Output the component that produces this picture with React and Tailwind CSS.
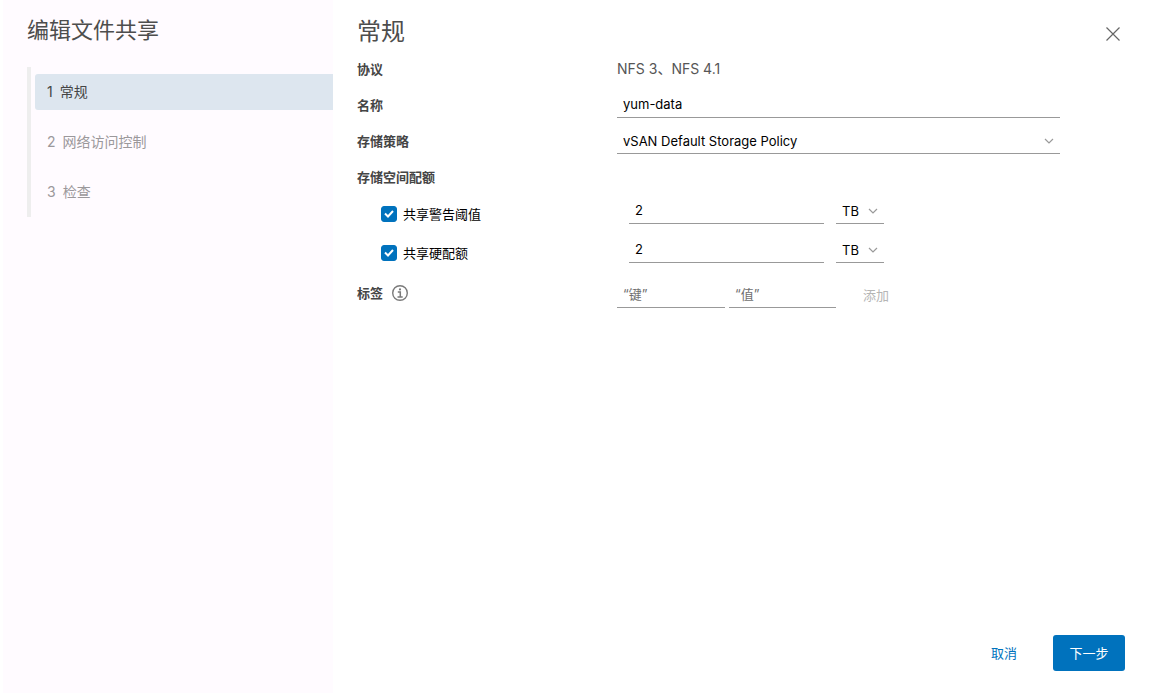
import React, { useState } from 'react';

const steps = ['常规', '网络访问控制', '检查'];

const inputStyle =
    'h-6 min-w-0 rounded-none border-0 border-b border-[#999999] bg-transparent px-1.5 pb-[3px] text-[13px] leading-5 text-black outline-none';

const selectStyle =
    'block h-6 appearance-none rounded-none border-0 border-b border-[#999999] bg-transparent px-1.5 pb-px text-[13px] leading-5 text-black outline-none';

const Chevron = () => (
    <svg viewBox="0 0 10 10" className="pointer-events-none absolute top-[6px] right-1.5 h-2.5 w-2.5" fill="none" stroke="#9a9a9a" strokeWidth="1.2">
        <path d="M1 3l4 4 4-4" />
    </svg>
);

const Checkbox = ({ id, checked, onChange, label }) => (
    <div className="flex h-[38px] w-[260px] shrink-0 items-center gap-1.5 pl-6">
        <span className="relative block h-4 w-4">
            <input
                id={id}
                type="checkbox"
                checked={checked}
                onChange={(e) => onChange(e.target.checked)}
                className="block h-4 w-4 appearance-none rounded-[3px] border border-[#0072bd] checked:bg-[#0072bd]"
            />
            {checked && (
                <svg viewBox="0 0 16 16" className="pointer-events-none absolute inset-0 h-4 w-4" fill="none" stroke="#fff" strokeWidth="2">
                    <path d="M4 7.5l3 3L12 5" />
                </svg>
            )}
        </span>
        <label htmlFor={id} className="text-[13px] leading-5 text-black">
            {label}
        </label>
    </div>
);

const QuotaRow = ({ id, label }) => {
    const [checked, setChecked] = useState(true);
    const [value, setValue] = useState('2');

    return (
        <div className="flex h-[39px]">
            <Checkbox id={id} checked={checked} onChange={setChecked} label={label} />
            <div className="flex gap-3 pt-[5px] pl-3">
                <input
                    aria-label={label}
                    value={value}
                    onChange={(e) => setValue(e.target.value)}
                    className={`${inputStyle} w-[195px]`}
                />
                <div className="relative h-6">
                    <select aria-label={`${label}单位`} defaultValue="TB" className={`${selectStyle} w-12`}>
                        <option>GB</option>
                        <option>TB</option>
                    </select>
                    <Chevron />
                </div>
            </div>
        </div>
    );
};

const Label = ({ children, ...props }) => (
    <label className="flex h-[35px] w-[260px] shrink-0 items-center text-[13px] leading-5 font-bold text-[#454545]" {...props}>
        {children}
    </label>
);

const App = () => {
    const [name, setName] = useState('yum-data');

    return (
        <div className="flex min-h-screen bg-white pb-px pl-[3px] font-[Inter,'Noto_Sans_CJK_SC',sans-serif] text-[13px] text-[#565656]">
            <aside className="w-[330px] shrink-0 bg-[#fffbff] pl-6">
                <h1 className="pt-[14px] text-[22px] leading-8 text-[#4d4d4d]">编辑文件共享</h1>
                <nav className="mt-[21px] border-l-4 border-[#eeeeee] pl-1">
                    <ol>
                        {steps.map((step, i) => (
                            <li key={step} className="flex h-[50px] items-center">
                                <button
                                    type="button"
                                    aria-current={i === 0 ? 'step' : undefined}
                                    className={`flex h-9 w-full items-center gap-[7px] rounded-l-[3px] pl-3 text-left text-sm ${
                                        i === 0 ? 'bg-[#dde6ef] text-[#454545]' : 'text-[#9b989b]'
                                    }`}
                                >
                                    <span>{i + 1}</span>
                                    <span>{step}</span>
                                </button>
                            </li>
                        ))}
                    </ol>
                </nav>
            </aside>

            <main className="flex min-w-0 flex-1 flex-col pr-7 pl-6">
                <header className="flex h-[51px] items-start justify-between pt-4">
                    <h2 className="text-2xl leading-8 text-[#4d4d4d]">常规</h2>
                    <button type="button" aria-label="关闭" className="flex h-9 w-6 items-center justify-center">
                        <svg viewBox="0 0 14 14" className="h-3.5 w-3.5" fill="none" stroke="#666" strokeWidth="1.2">
                            <path d="M.5.5l13 13M13.5.5l-13 13" />
                        </svg>
                    </button>
                </header>

                <form className="flex-1 pr-[65px]">
                    <div className="flex h-9 items-center">
                        <h3 className="w-[260px] shrink-0 leading-5 font-bold text-[#454545]">协议</h3>
                        <p className="text-sm leading-5">NFS 3、NFS 4.1</p>
                    </div>

                    <div className="flex h-9">
                        <Label htmlFor="name">名称</Label>
                        <div className="flex flex-1 pt-[7px]">
                            <input id="name" value={name} onChange={(e) => setName(e.target.value)} className={`${inputStyle} w-full`} />
                        </div>
                    </div>

                    <div className="flex h-9">
                        <Label htmlFor="policy">存储策略</Label>
                        <div className="flex-1 pt-[7px]">
                            <div className="relative">
                                <select id="policy" className={`${selectStyle} w-full`}>
                                    <option>vSAN Default Storage Policy</option>
                                </select>
                                <Chevron />
                            </div>
                        </div>
                    </div>

                    <h3 className="flex h-9 items-center leading-5 font-bold text-[#454545]">存储空间配额</h3>
                    <QuotaRow id="warning" label="共享警告阈值" />
                    <QuotaRow id="hard" label="共享硬配额" />

                    <div className="flex h-10">
                        <div className="flex w-[260px] shrink-0 items-center gap-[9px]">
                            <h3 className="leading-5 font-bold text-[#454545]">标签</h3>
                            <button type="button" aria-label="标签信息">
                                <svg viewBox="0 0 16 16" className="block h-4 w-4" fill="none" stroke="#7a7a7a">
                                    <circle cx="8" cy="8" r="7.3" strokeWidth="1.4" />
                                    <path d="M5.8 7h2.5v5M5.5 12h5.2" strokeWidth="1.5" />
                                    <circle cx="8" cy="4.4" r="1.1" fill="#7a7a7a" stroke="none" />
                                </svg>
                            </button>
                        </div>
                        <div className="flex gap-1 pt-[11px]">
                            <input aria-label="键" placeholder="“键”" className={`${inputStyle} w-[108px] placeholder:text-[#6f6f6f]`} />
                            <input aria-label="值" placeholder="“值”" className={`${inputStyle} w-[107px] placeholder:text-[#6f6f6f]`} />
                            <button type="button" disabled className="ml-[23px] h-[22px] leading-5 text-[#b5b5b5]">
                                添加
                            </button>
                        </div>
                    </div>
                </form>

                <footer className="flex justify-end gap-6 pb-[22px]">
                    <button type="button" className="h-9 px-3 leading-5 text-[#0072bd]">
                        取消
                    </button>
                    <button type="button" className="h-9 w-[72px] rounded-[3px] bg-[#0072bd] leading-5 text-white">
                        下一步
                    </button>
                </footer>
            </main>
        </div>
    );
};

export default App;
